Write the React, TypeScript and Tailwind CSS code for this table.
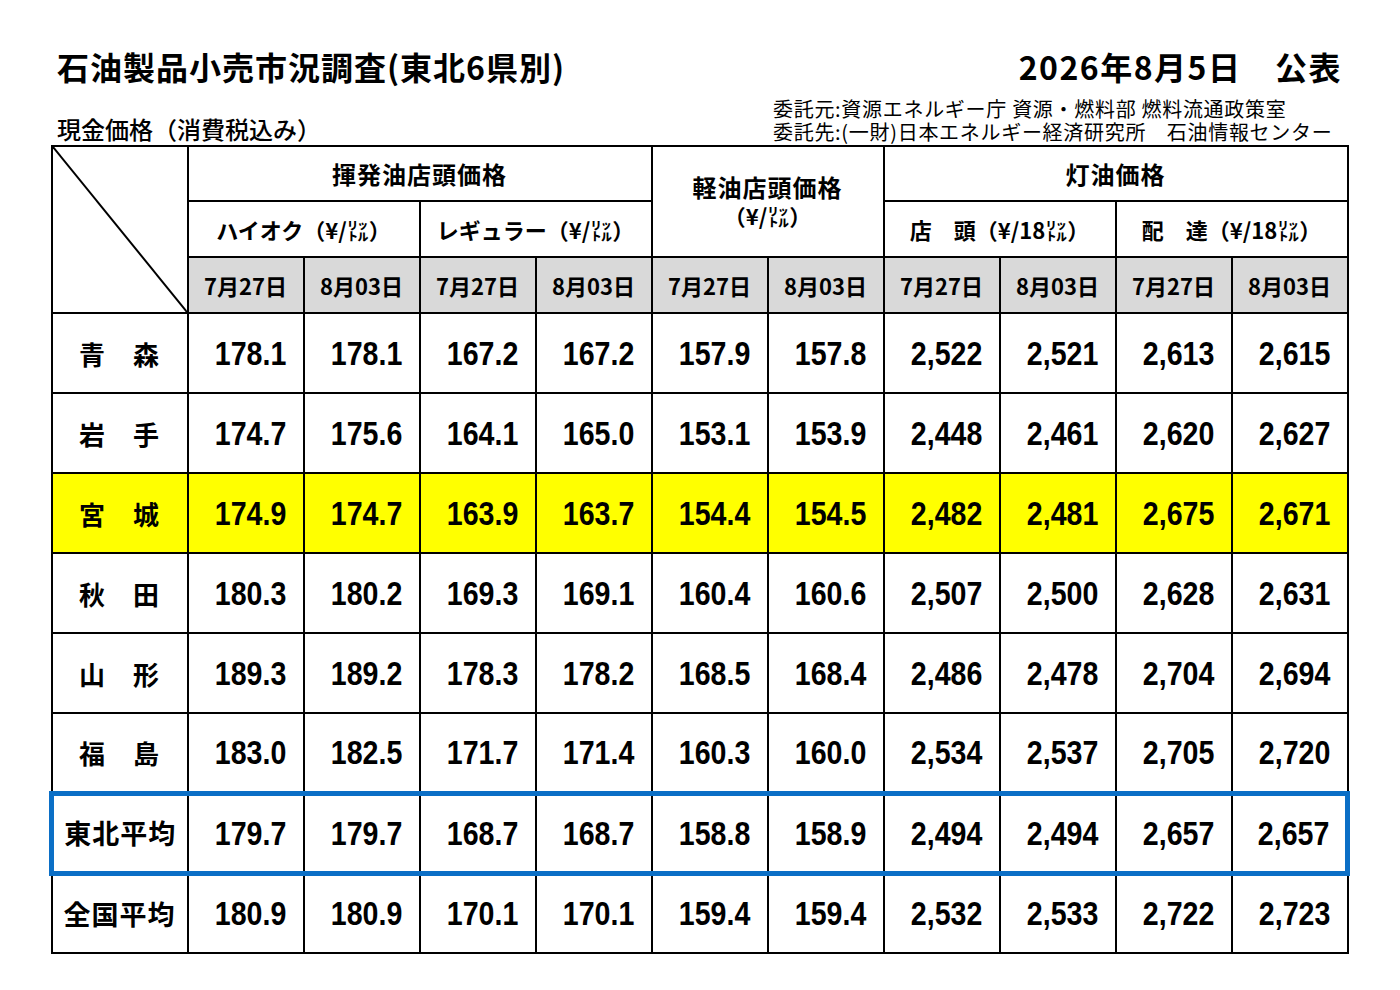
import React from 'react';

const jp = "font-['Noto_Sans_CJK_JP','Noto_Sans',sans-serif]";
const num = "font-['Liberation_Sans','Noto_Sans_CJK_JP',sans-serif]";

interface Row {
  name: string;
  values: string[];
  highlight?: 'yellow' | 'blue';
  wide?: boolean;
}

const dates = ['7月27日', '8月03日', '7月27日', '8月03日', '7月27日', '8月03日', '7月27日', '8月03日', '7月27日', '8月03日'];

const rows: Row[] = [
  { name: '青　森', values: ['178.1', '178.1', '167.2', '167.2', '157.9', '157.8', '2,522', '2,521', '2,613', '2,615'] },
  { name: '岩　手', values: ['174.7', '175.6', '164.1', '165.0', '153.1', '153.9', '2,448', '2,461', '2,620', '2,627'] },
  { name: '宮　城', values: ['174.9', '174.7', '163.9', '163.7', '154.4', '154.5', '2,482', '2,481', '2,675', '2,671'], highlight: 'yellow' },
  { name: '秋　田', values: ['180.3', '180.2', '169.3', '169.1', '160.4', '160.6', '2,507', '2,500', '2,628', '2,631'] },
  { name: '山　形', values: ['189.3', '189.2', '178.3', '178.2', '168.5', '168.4', '2,486', '2,478', '2,704', '2,694'] },
  { name: '福　島', values: ['183.0', '182.5', '171.7', '171.4', '160.3', '160.0', '2,534', '2,537', '2,705', '2,720'] },
  { name: '東北平均', values: ['179.7', '179.7', '168.7', '168.7', '158.8', '158.9', '2,494', '2,494', '2,657', '2,657'], highlight: 'blue', wide: true },
  { name: '全国平均', values: ['180.9', '180.9', '170.1', '170.1', '159.4', '159.4', '2,532', '2,533', '2,722', '2,723'], wide: true },
];

// ㍑ glyph (stacked リットル)
function Litre() {
  return <span className="text-[22px]">㍑</span>;
}

export default function App() {
  return (
    <div className={`w-[1400px] h-[990px] bg-white text-black ${jp}`}>
      <div className="pl-[49px] pt-[48px]">
        {/* Title line */}
        <div className="flex items-center justify-between w-[1293px] pl-[8px]">
          <h1 className="text-[32px] font-bold leading-[36px] tracking-[1px]">石油製品小売市況調査(東北6県別)</h1>
          <div className="text-[32px] font-bold leading-[36px] tracking-[1.5px]">2026年8月5日　公表</div>
        </div>

        {/* Sub header */}
        <div className="flex items-end justify-between w-[1301px] mt-[10px] h-[49px]">
          <div className="pl-[8px] text-[24px] leading-[28px] font-medium">現金価格（消費税込み）</div>
          <div className="text-[20px] leading-[23px] tracking-[0.7px] w-[577px] whitespace-nowrap">
            <div>委託元:資源エネルギー庁 資源・燃料部 燃料流通政策室</div>
            <div>委託先:(一財)日本エネルギー経済研究所　石油情報センター</div>
          </div>
        </div>

        {/* Table */}
        <table className="table-fixed border-collapse w-[1301px] mt-[2px]">
          <colgroup>
            <col className="w-[136px]" />
            {dates.map((_, i) => (
              <col key={i} />
            ))}
          </colgroup>
          <thead>
            <tr className="h-[55px]">
              <th rowSpan={3} className="border-2 border-black p-0 relative">
                <svg className="absolute inset-0 w-full h-full" preserveAspectRatio="none" viewBox="0 0 100 100">
                  <line x1="0" y1="0" x2="100" y2="100" stroke="black" strokeWidth="2" vectorEffect="non-scaling-stroke" />
                </svg>
              </th>
              <th colSpan={4} className="border-2 border-black text-[24px] font-bold tracking-[1px]">揮発油店頭価格</th>
              <th colSpan={2} rowSpan={2} className="border-2 border-black font-bold align-middle">
                <div className="text-[24px] leading-[30px] tracking-[1px]">軽油店頭価格</div>
                <div className="text-[22px] leading-[24px] mt-[1px] mb-[4px]">（¥/<Litre />）</div>
              </th>
              <th colSpan={4} className="border-2 border-black text-[24px] font-bold tracking-[1px]">灯油価格</th>
            </tr>
            <tr className="h-[56px]">
              <th colSpan={2} className="border-2 border-black text-[22px] font-bold">ハイオク（¥/<Litre />）</th>
              <th colSpan={2} className="border-2 border-black text-[22px] font-bold">レギュラー（¥/<Litre />）</th>
              <th colSpan={2} className="border-2 border-black text-[22px] font-bold">店　頭（¥/18<Litre />）</th>
              <th colSpan={2} className="border-2 border-black text-[22px] font-bold">配　達（¥/18<Litre />）</th>
            </tr>
            <tr className="h-[56px] bg-[#d9d9d9]">
              {dates.map((d, i) => (
                <th key={i} className="border-2 border-black text-[22px] font-bold">
                  {d}
                </th>
              ))}
            </tr>
          </thead>
          <tbody>
            {rows.map((r) => {
              const yellow = r.highlight === 'yellow';
              const blue = r.highlight === 'blue';
              const base = blue
                ? 'border-2 border-black border-y-[5px] border-y-[#0b6fc6]'
                : 'border-2 border-black';
              return (
                <tr key={r.name} className={`h-[80px] ${yellow ? 'bg-[#ffff00]' : ''}`}>
                  <td
                    className={`${base} ${blue ? 'border-l-[5px] border-l-[#0b6fc6]' : ''} text-center font-bold ${
                      r.wide ? 'text-[27px] tracking-[1px]' : 'text-[26px] tracking-[1px]'
                    }`}
                  >
                    {r.name}
                  </td>
                  {r.values.map((v, i) => (
                    <td
                      key={i}
                      className={`${base} ${blue && i === r.values.length - 1 ? 'border-r-[5px] border-r-[#0b6fc6]' : ''} text-center`}
                    >
                      <span className={`inline-block ${num} text-[34px] font-bold scale-x-[0.84] pl-[12px]`}>{v}</span>
                    </td>
                  ))}
                </tr>
              );
            })}
          </tbody>
        </table>
      </div>
    </div>
  );
}
